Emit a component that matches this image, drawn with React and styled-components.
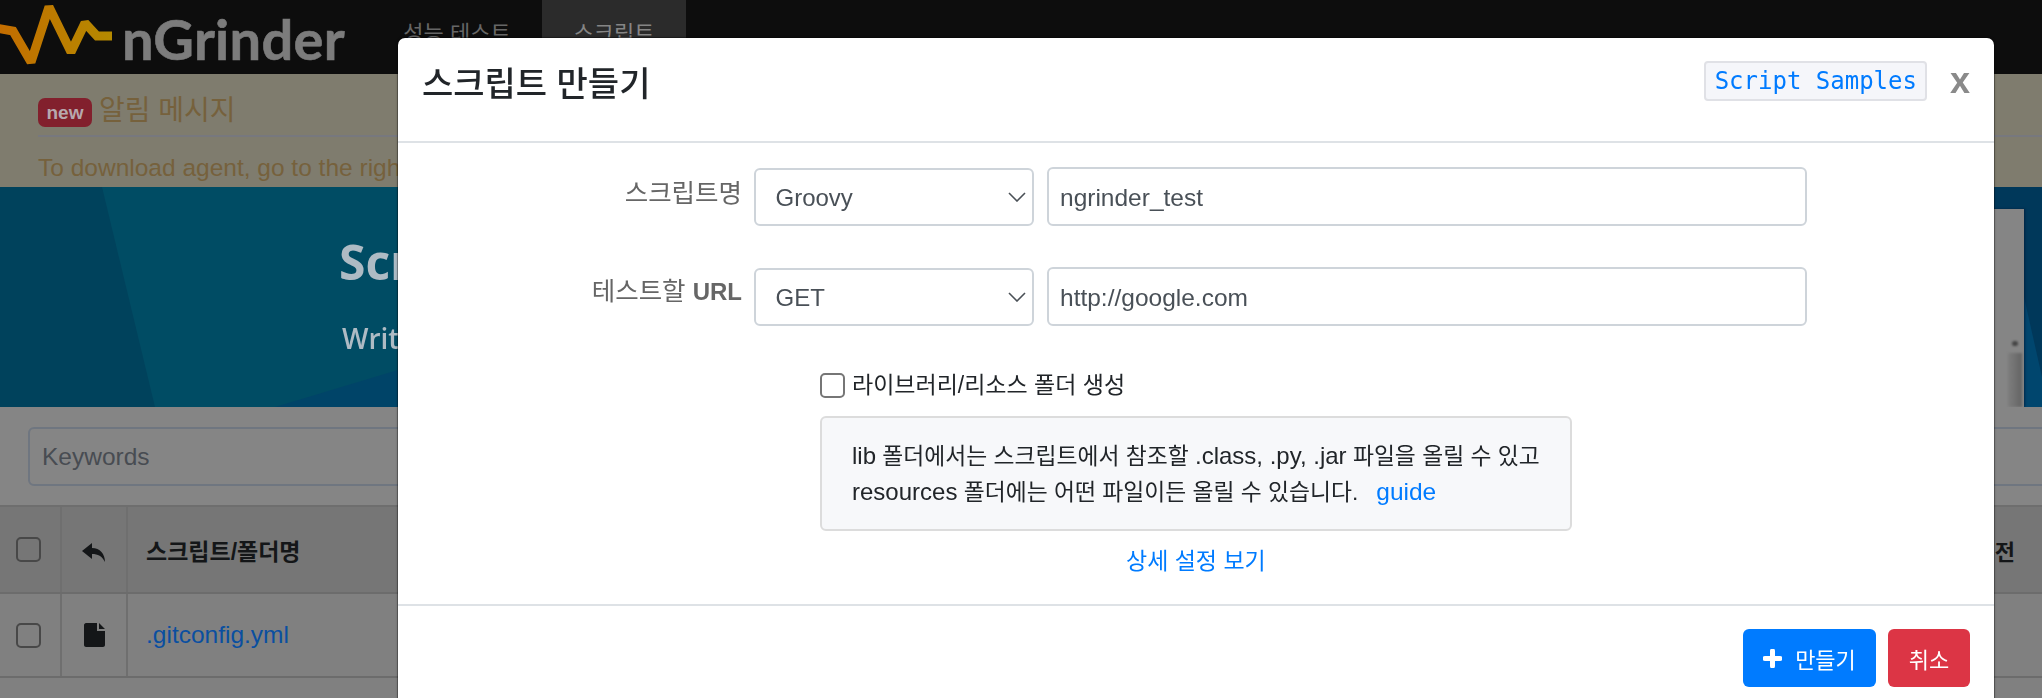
import React from 'react'
import styled, { createGlobalStyle } from 'styled-components'

const SANS = `"Liberation Sans", "Noto Sans CJK KR", sans-serif`

const Global = createGlobalStyle`
  html, body {
    margin: 0;
    height: 100%;
    overflow: hidden;
    background: #808080;
    font-family: ${SANS};
  }
  * { box-sizing: border-box; }
`

function Logo () {
  return (
    <LogoWrap>
      <svg width="116" height="74" viewBox="0 0 116 74">
        <defs>
          <linearGradient id="wave" x1="0" x2="1" y1="0" y2="0">
            <stop offset="0" stopColor="#c46c00" />
            <stop offset="1" stopColor="#b58a00" />
          </linearGradient>
        </defs>
        <path d="M-4 28 L13 31 L31 62 L49 7 L71 52 L85 23 L97 36 L112 36" fill="none" stroke="url(#wave)" strokeWidth="9" strokeLinejoin="miter" strokeMiterlimit="1.5" />
      </svg>
      <LogoText>nGrinder</LogoText>
    </LogoWrap>
  )
}

function Chevron () {
  return (
    <ChevronIcon width="18" height="10" viewBox="0 0 18 10">
      <path d="M1 1 L9 9 L17 1" fill="none" stroke="#4a5056" strokeWidth="1.6" />
    </ChevronIcon>
  )
}

function ReplyIcon () {
  return (
    <ReplySvg width="24" height="19" viewBox="0 0 24 19">
      <path d="M10 0 L0 8 L10 16 V11 C16 11 20 13 23 19 C23 11 18 5 10 5 Z" fill="#141618" />
    </ReplySvg>
  )
}

function FileIcon () {
  return (
    <svg width="21" height="24" viewBox="0 0 21 24">
      <path d="M2 0 H13 V8 H21 V22 C21 23 20 24 19 24 H2 C1 24 0 23 0 22 V2 C0 1 1 0 2 0 Z M15 0 L21 6 H15 Z" fill="#141618" />
    </svg>
  )
}

function PlusIcon () {
  return (
    <svg width="19" height="19" viewBox="0 0 19 19">
      <path d="M9.5 2 V17 M2 9.5 H17" stroke="#fff" strokeWidth="5" strokeLinecap="round" />
    </svg>
  )
}

export default function App () {
  return (
    <Page>
      <Global />
      <Navbar>
        <Logo />
        <NavItem>성능 테스트</NavItem>
        <NavItem active>스크립트</NavItem>
      </Navbar>
      <Notice>
        <NoticeTitle><NewBadge>new</NewBadge><span>알림 메시지</span></NoticeTitle>
        <NoticeBody>To download agent, go to the right top menu</NoticeBody>
      </Notice>
      <Banner>
        <BannerArt viewBox="0 0 2042 220" preserveAspectRatio="none">
          <rect width="2042" height="220" fill="#004c64" />
          <polygon points="0,0 102,0 155,220 0,220" fill="#00425c" />
          <polygon points="275,220 640,110 640,220" fill="#004468" />
          <polygon points="1900,0 2042,0 2042,220 1900,220" fill="#00385a" />
          <polygon points="2024,110 2042,190 2042,220 2024,220" fill="#00466e" />
        </BannerArt>
        <BannerTitle>Script</BannerTitle>
        <BannerLead>Write your test scripts</BannerLead>
        <EditorShot>
          <ScrollArrow />
          <ScrollThumb />
        </EditorShot>
      </Banner>
      <SearchBar>
        <KeywordInput placeholder="Keywords" readOnly />
      </SearchBar>
      <TableRow head>
        <CheckCell><BoxCheck type="checkbox" readOnly /></CheckCell>
        <Cell center><ReplyIcon /></Cell>
        <NameCell head>스크립트/폴더명</NameCell>
        <EndCell>버전</EndCell>
      </TableRow>
      <TableRow>
        <CheckCell><BoxCheck type="checkbox" readOnly /></CheckCell>
        <Cell center><FileIcon /></Cell>
        <NameCell><FileLink>.gitconfig.yml</FileLink></NameCell>
        <EndCell />
      </TableRow>

      <ModalLayer>
        <Modal>
          <ModalHeader>
            <ModalTitle>스크립트 만들기</ModalTitle>
            <SamplesTag>Script Samples</SamplesTag>
            <CloseButton>x</CloseButton>
          </ModalHeader>
          <ModalBody>
            <FormRow>
              <FieldLabel>스크립트명</FieldLabel>
              <SelectWrap>
                <Select defaultValue="Groovy">
                  <option>Groovy</option>
                  <option>Jython</option>
                </Select>
                <Chevron />
              </SelectWrap>
              <TextInput defaultValue="ngrinder_test" />
            </FormRow>
            <FormRow>
              <FieldLabel lift>테스트할 <UrlWord>URL</UrlWord></FieldLabel>
              <SelectWrap>
                <Select defaultValue="GET">
                  <option>GET</option>
                  <option>POST</option>
                </Select>
                <Chevron />
              </SelectWrap>
              <TextInput defaultValue="http://google.com" />
            </FormRow>
            <CheckRow>
              <ModalCheck type="checkbox" readOnly />
              <CheckText>라이브러리/리소스 폴더 생성</CheckText>
            </CheckRow>
            <HelpBox>
              <Latin>lib</Latin> 폴더에서는 스크립트에서 참조할 <Latin>.class, .py, .jar</Latin> 파일을 올릴 수 있고<br />
              <Latin>resources</Latin> 폴더에는 어떤 파일이든 올릴 수 있습니다.<GuideLink>guide</GuideLink>
            </HelpBox>
            <DetailLink>상세 설정 보기</DetailLink>
          </ModalBody>
          <ModalFooter>
            <ActionButton tone="#007bff" wide><PlusIcon />만들기</ActionButton>
            <ActionButton tone="#dc3545">취소</ActionButton>
          </ModalFooter>
        </Modal>
      </ModalLayer>
    </Page>
  )
}

const Page = styled.div`
  height: 698px;
  overflow: hidden;
  background: #808080;
`

const Navbar = styled.div`
  display: flex;
  align-items: stretch;
  height: 74px;
  background: #0d0d0d;
`

const LogoWrap = styled.div`
  display: flex;
  align-items: flex-start;
  width: 372px;
  filter: blur(0.6px);
`

const LogoText = styled.span`
  margin: 7px 0 0 6px;
  font-family: Lato, sans-serif;
  font-size: 56px;
  font-weight: 700;
  line-height: 64px;
  letter-spacing: .3px;
  color: #7c7c7c;
  -webkit-text-stroke: .6px #7c7c7c;
`

const NavItem = styled.div`
  display: flex;
  justify-content: center;
  padding-top: 20px;
  width: ${p => p.active ? '144px' : '170px'};
  font-size: 22px;
  line-height: 28px;
  color: ${p => p.active ? '#858585' : '#666'};
  background: ${p => p.active ? '#2b2b2b' : 'transparent'};
`

const Notice = styled.div`
  height: 113px;
  padding: 20px 0 0 38px;
  background: #7f7c6e;
  color: #76613c;
`

const NoticeTitle = styled.div`
  display: flex;
  align-items: flex-start;
  height: 43px;
  gap: 7px;
  font-size: 28px;
  line-height: 34px;
  border-bottom: 2px solid #77787e;
`

const NewBadge = styled.span`
  display: inline-flex;
  align-items: center;
  justify-content: center;
  width: 54px;
  height: 29px;
  margin-top: 4px;
  border-radius: 7px;
  background: #82202d;
  color: #b7a8ae;
  font-size: 19px;
  line-height: 29px;
  font-weight: 700;
`

const NoticeBody = styled.div`
  margin-top: 16px;
  font-size: 24.5px;
  line-height: 30px;
`

const Banner = styled.div`
  position: relative;
  height: 220px;
  padding: 51px 0 0 339px;
  overflow: hidden;
  color: #aebbc4;
  font-family: "Open Sans", sans-serif;
`

const BannerArt = styled.svg`
  position: absolute;
  inset: 0;
  width: 100%;
  height: 100%;
`

const BannerTitle = styled.div`
  position: relative;
  font-size: 48px;
  font-weight: 700;
  line-height: 48px;
  filter: blur(0.6px);
`

const BannerLead = styled.div`
  position: relative;
  margin: 35px 0 0 3px;
  font-size: 28px;
  font-weight: 600;
  line-height: 34px;
  filter: blur(0.4px);
`

const EditorShot = styled.div`
  position: absolute;
  top: 22px;
  right: 18px;
  bottom: 0;
  width: 400px;
  background: #858585;
  box-shadow: 1px 0 2px rgba(0, 20, 50, .6);
`

const ScrollThumb = styled.div`
  position: absolute;
  right: 2px;
  bottom: 0;
  width: 14px;
  height: 54px;
  background: linear-gradient(90deg, #7e7e7e, #646464);
  filter: blur(1px);
`

const ScrollArrow = styled.div`
  position: absolute;
  right: 6px;
  bottom: 61px;
  width: 6px;
  height: 5px;
  border-radius: 3px;
  background: #444;
  filter: blur(1px);
`

const SearchBar = styled.div`
  display: flex;
  height: 100px;
  padding: 20px 0 0 28px;
  margin-right: -20px;
  border-bottom: 2px solid #6e6e6e;
  background: #858585;
`

const KeywordInput = styled.input`
  flex: 1;
  height: 59px;
  padding: 0 12px;
  border: 2px solid #6f7680;
  border-radius: 6px;
  background: #858585;
  font: 24.5px ${SANS};
  &::placeholder { color: #484c52; opacity: 1; }
`

const TableRow = styled.div`
  display: grid;
  grid-template-columns: 62px 66px 1fr 120px;
  height: ${p => p.head ? '87px' : '84px'};
  background: ${p => p.head ? '#767676' : '#808080'};
  border-bottom: 2px solid #6c6c6c;
`

const Cell = styled.div`
  display: flex;
  align-items: center;
  justify-content: ${p => p.center ? 'center' : 'flex-start'};
  border-right: 2px solid #6f6f6f;
`

const CheckCell = styled(Cell)`
  padding-left: 16px;
`

const ReplySvg = styled.svg`
  margin-top: 6px;
  filter: blur(0.5px);
`

const NameCell = styled(Cell)`
  padding-left: 18px;
  border-right: none;
  font-size: ${p => p.head ? '23px' : '24.5px'};
  font-weight: ${p => p.head ? 700 : 400};
  color: #141618;
`

const EndCell = styled.div`
  display: flex;
  align-items: center;
  justify-content: flex-end;
  padding-right: 27px;
  font-size: 22px;
  font-weight: 700;
  color: #141618;
`

const FileLink = styled.a`
  color: #0a4fa0;
`

const BoxCheck = styled.input`
  appearance: none;
  flex: none;
  width: 25px;
  height: 25px;
  margin: 0;
  border: 2px solid #484848;
  border-radius: 5px;
  background: transparent;
`

const ModalCheck = styled(BoxCheck)`
  border-color: #767676;
  background: #fff;
`

const ModalLayer = styled.div`
  position: fixed;
  inset: 0;
  display: flex;
  align-items: flex-start;
  padding: 38px 48px 0 398px;
  overflow: hidden;
`

const Modal = styled.div`
  flex: 1;
  min-height: 720px;
  background: #fff;
  border-radius: 7px;
  box-shadow: 0 0 0 1px rgba(0, 0, 0, .25), 0 0 3px rgba(0, 0, 0, .4);
`

const ModalHeader = styled.div`
  display: flex;
  align-items: flex-start;
  height: 105px;
  padding: 0 24px;
  border-bottom: 2px solid #dee2e6;
`

const ModalTitle = styled.h5`
  flex: 1;
  margin: 24px 0 0;
  font-size: 34px;
  font-weight: 500;
  line-height: 44px;
  color: #212529;
`

const SamplesTag = styled.code`
  margin-top: 23px;
  height: 40px;
  padding: 0 8px 0 9px;
  border: 2px solid #e0e1e6;
  border-radius: 4px;
  background: #f5f6fa;
  font: 24px/36px "DejaVu Sans Mono", monospace;
  color: #007bff;
`

const CloseButton = styled.span`
  margin: 18px 0 0 23px;
  font: 700 36px/50px "Liberation Sans", sans-serif;
  color: #8a8a8a;
`

const ModalBody = styled.div`
  height: 461px;
  padding-top: 24px;
`

const FormRow = styled.div`
  display: grid;
  grid-template-columns: 342px 280px 760px;
  column-gap: 13.5px;
  align-items: center;
  margin-bottom: 41px;
`

const FieldLabel = styled.label`
  justify-self: end;
  margin: 0 -2px ${p => p.lift ? '11px' : '7px'} 0;
  font-size: 25.5px;
  line-height: 30px;
  color: #666;
  white-space: nowrap;
`

const UrlWord = styled.b`
  font-size: 24px;
`

const SelectWrap = styled.div`
  position: relative;
  height: 58px;
`

const Select = styled.select`
  appearance: none;
  width: 100%;
  height: 100%;
  padding: 2px 0 0 20px;
  border: 2px solid #ced4da;
  border-radius: 6px;
  background: #fff;
  font: 24px ${SANS};
  color: #495057;
`

const ChevronIcon = styled.svg`
  position: absolute;
  top: 24px;
  right: 8px;
  pointer-events: none;
`

const TextInput = styled.input`
  height: 59px;
  padding: 2px 11px 0;
  border: 2px solid #ced4da;
  border-radius: 6px;
  font: 24.5px ${SANS};
  color: #495057;
`

const CheckRow = styled.div`
  display: flex;
  align-items: center;
  gap: 7px;
  margin: 47px 0 0 422px;
`

const CheckText = styled.span`
  font-size: 23px;
  line-height: 25px;
  color: #212529;
`

const HelpBox = styled.div`
  width: 752px;
  height: 115px;
  margin: 18px 0 0 422px;
  padding: 20px 0 0 30px;
  border: 2px solid #dcdcdc;
  border-radius: 6px;
  background: #f7f8fa;
  font-size: 22.8px;
  line-height: 36px;
  color: #212529;
  white-space: nowrap;
`

const Latin = styled.span`
  font-size: 24px;
`

const GuideLink = styled.a`
  margin-left: 18px;
  font-size: 24.5px;
  color: #007bff;
`

const DetailLink = styled.a`
  display: block;
  width: 140px;
  margin: 16px 0 0 728px;
  font-size: 23px;
  line-height: 28px;
  white-space: nowrap;
  color: #007bff;
`

const ModalFooter = styled.div`
  display: flex;
  justify-content: flex-end;
  gap: 12px;
  padding: 23px 24px 0;
  border-top: 2px solid #dee2e6;
`

const ActionButton = styled.button`
  display: flex;
  align-items: center;
  justify-content: center;
  gap: 13px;
  width: ${p => p.wide ? '133px' : '82px'};
  height: 58px;
  border: none;
  border-radius: 6px;
  background: ${p => p.tone};
  color: #fff;
  font: 22px ${SANS};
`
